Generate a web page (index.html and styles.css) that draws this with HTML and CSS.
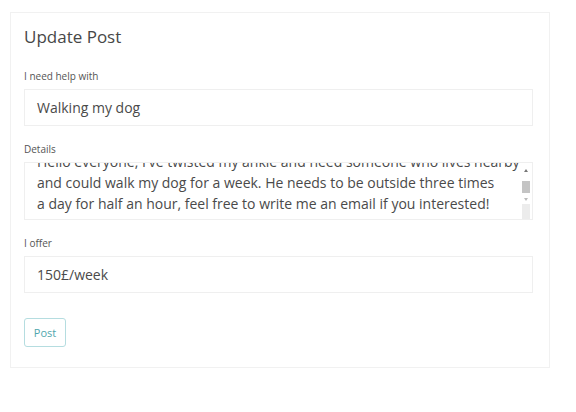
FILE: index.html
```html
<!DOCTYPE html>
<html lang="en">
<head>
<meta charset="utf-8">
<title>Update Post</title>
<link rel="stylesheet" href="styles.css">
</head>
<body>
<div class="card">
  <h1 class="title">Update Post</h1>
  <div class="group">
    <label class="label">I need help with</label>
    <div class="field">Walking my dog</div>
  </div>
  <div class="group">
    <label class="label">Details</label>
    <div class="area">
      <div class="area-view">
        <div class="area-text">Hello everyone, I've twisted my ankle and need someone who lives nearby<br>and could walk my dog for a week. He needs to be outside three times<br>a day for half an hour, feel free to write me an email if you interested!</div>
      </div>
      <div class="scrollbar">
        <span class="arrow up"></span>
        <span class="thumb"></span>
        <span class="arrow down"></span>
        <span class="track"></span>
      </div>
    </div>
  </div>
  <div class="group">
    <label class="label">I offer</label>
    <div class="field">150£/week</div>
  </div>
  <button class="btn">Post</button>
</div>
</body>
</html>
```

FILE: styles.css
```css
* { box-sizing: border-box; }
html, body { margin: 0; padding: 0; background: #fff; }
body {
  font-family: "Open Sans", "Noto Sans", sans-serif;
  color: #555;
  padding: 12px 26px 0 10px;
}
.card {
  width: 540px;
  height: 356px;
  border: 1px solid #f1f1f1;
  padding: 14px 16px 0 13px;
  display: flex;
  flex-direction: column;
}
.title {
  margin: 0;
  font-size: 17px;
  line-height: 20px;
  font-weight: 400;
  color: #474747;
}
.group {
  display: flex;
  flex-direction: column;
  gap: 6px;
  margin-top: 16px;
}
.group:first-of-type { margin-top: 22px; }
.label {
  font-size: 10px;
  line-height: 14px;
  color: #555;
}
.field {
  height: 37px;
  border: 1px solid #efefef;
  padding: 0 12px;
  display: flex;
  align-items: center;
  font-size: 14px;
  color: #4a4a4a;
}
.area {
  height: 58px;
  border: 1px solid #efefef;
  display: flex;
  overflow: hidden;
}
.area-view {
  flex: 1;
  overflow: hidden;
  padding: 0 6px 0 12px;
}
.area-text {
  margin-top: -12px;
  font-size: 14px;
  line-height: 21px;
  white-space: nowrap;
  color: #4a4a4a;
}
.scrollbar {
  width: 10px;
  margin-right: 1px;
  display: flex;
  flex-direction: column;
  align-items: center;
  padding-top: 6px;
}
.arrow {
  width: 0; height: 0;
  border-left: 2px solid transparent;
  border-right: 2px solid transparent;
}
.arrow.up { border-bottom: 3px solid #777; }
.arrow.down { border-top: 3px solid #bbb; margin-top: 5px; }
.thumb {
  width: 8px;
  height: 12px;
  background: #c4c4c4;
  margin-top: 9px;
}
.track {
  width: 8px;
  flex: 1;
  margin-top: 3px;
  background: #ececec;
}
.btn {
  align-self: flex-start;
  margin-top: 25px;
  width: 42px;
  height: 29px;
  border: 1px solid #b5dde0;
  border-radius: 3px;
  background: #fff;
  color: #4fa6ad;
  font-family: "Open Sans", "Noto Sans", sans-serif;
  font-size: 11px;
  padding: 0;
}
```
